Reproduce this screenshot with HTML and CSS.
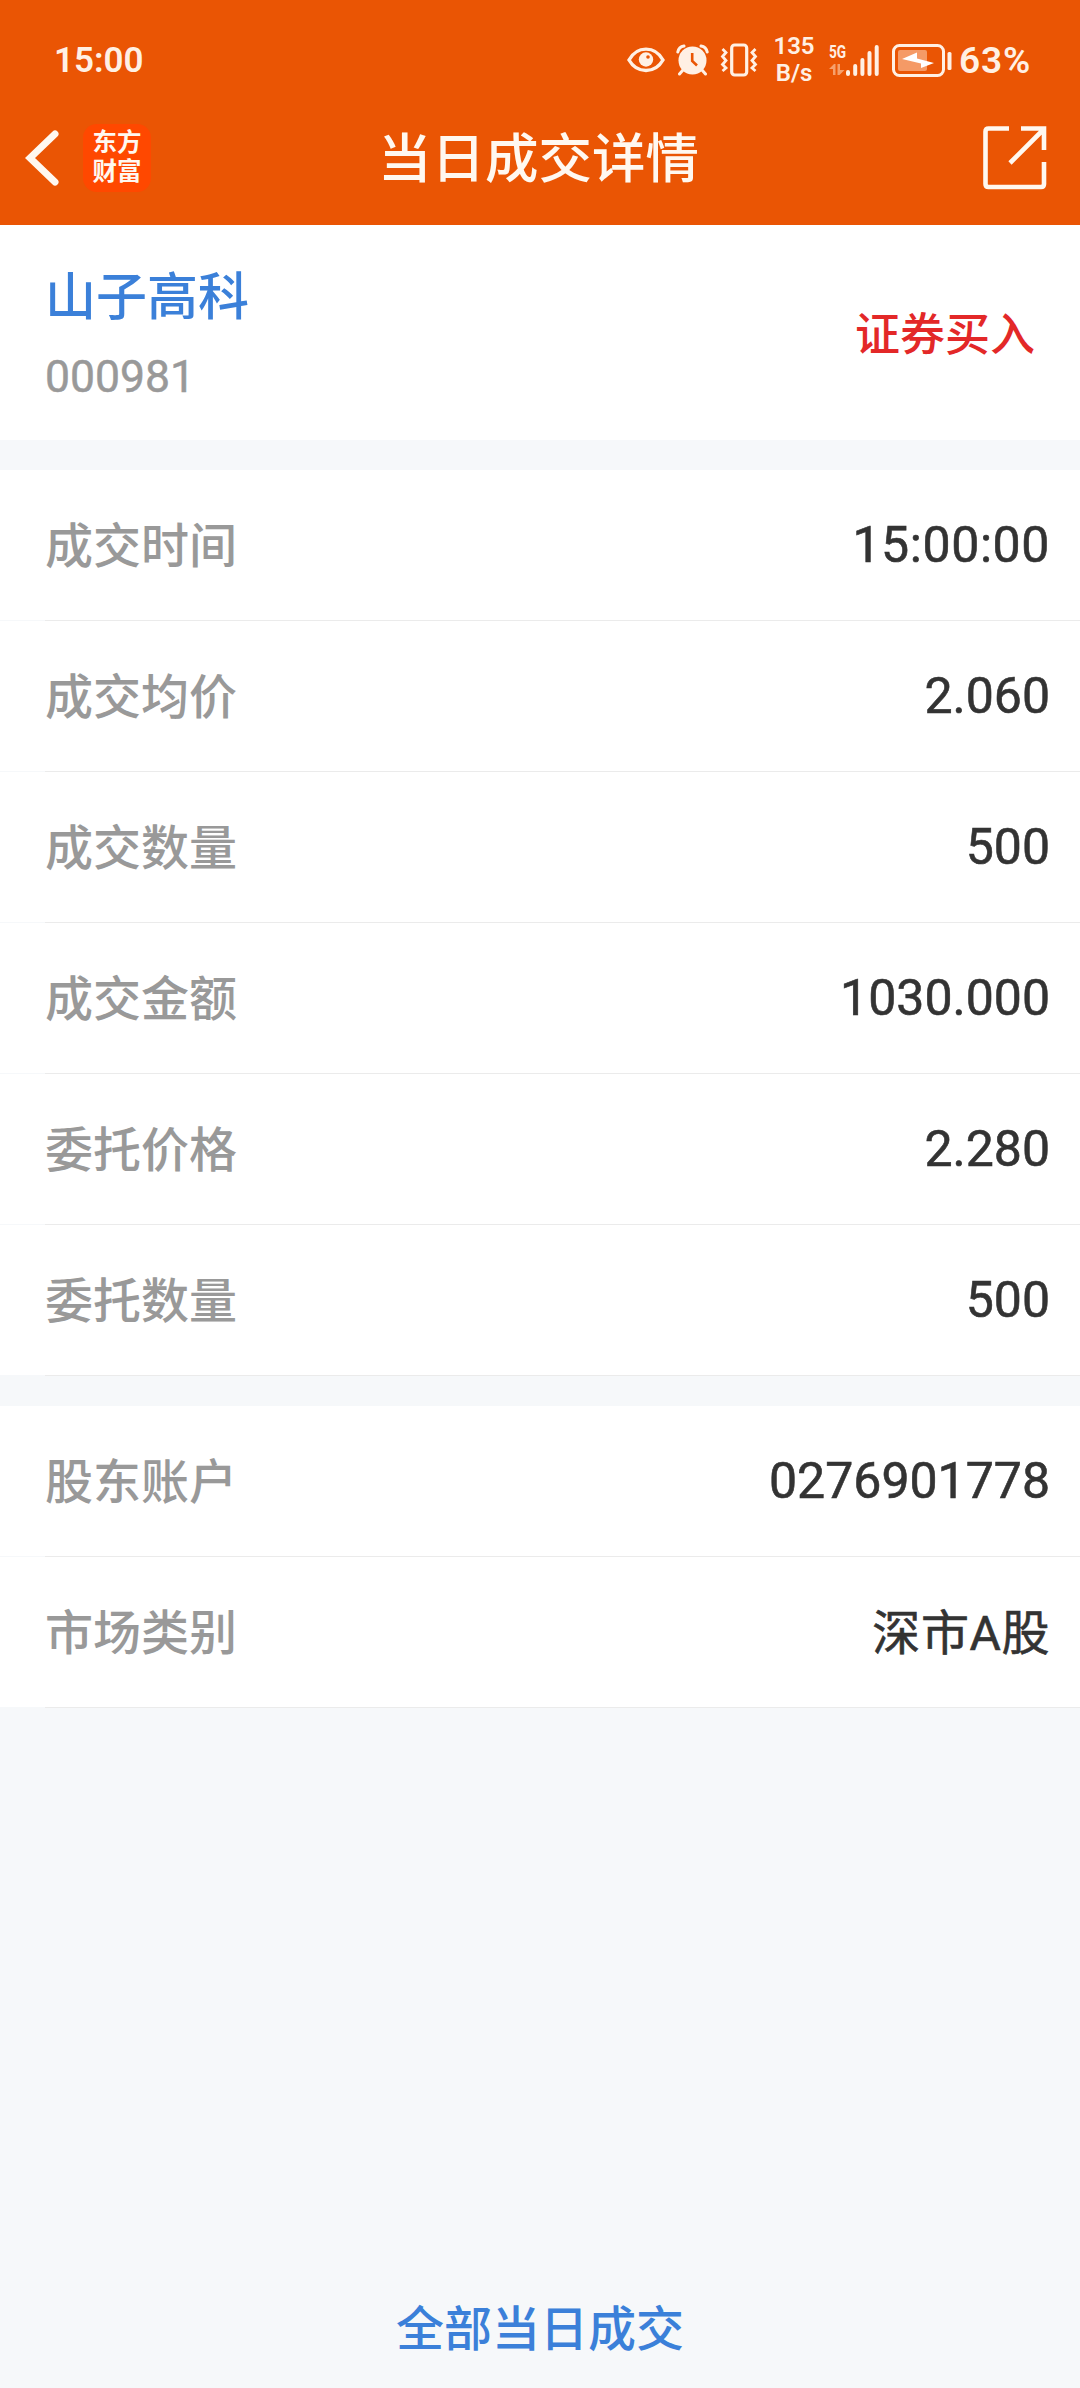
FILE: index.html
```html
<!DOCTYPE html>
<html lang="zh-CN">
<head>
    <meta charset="UTF-8">
    <meta name="viewport" content="width=device-width, initial-scale=1.0">
    <title>当日成交详情</title>
    <link rel="stylesheet" href="styles.css">
</head>
<body>
    <header>
        <div class="status-bar">
            <span class="clock">15:00</span>
            <div class="status-icons">
                <svg class="eye" width="38" height="26" viewBox="0 0 38 26">
                    <path d="M2 13C10-1.500 28-1.500 36 13C28 27 10 27 2 13Z" fill="none" stroke="#fff0e4" stroke-width="3.400"/>
                    <circle cx="19" cy="12.500" r="7.200" fill="#fff0e4"/>
                    <circle cx="21" cy="10" r="1.800" fill="#ea5504"/>
                </svg>
                <svg class="alarm" width="33" height="32" viewBox="0 0 33 32">
                    <circle cx="16.500" cy="16.500" r="14" fill="#fff0e4"/>
                    <path d="M1.800 8C2.500 4.500 5 2.500 8 2M31.200 8C30.500 4.500 28 2.500 25 2M7 26L3.500 30M26 26L29.500 30" fill="none" stroke="#fff0e4" stroke-width="3" stroke-linecap="round"/>
                    <path d="M16.200 9V17L21 21.500" fill="none" stroke="#ea5504" stroke-width="2.600"/>
                </svg>
                <svg class="vibrate" width="38" height="34" viewBox="0 0 38 34">
                    <rect x="11.700" y="2" width="15" height="30" rx="3" fill="none" stroke="#fff0e4" stroke-width="3.200"/>
                    <path d="M2.500 6L6 9.500L2.500 13.500L6 17.500L2.500 21.500L6 25L2.500 28M35.500 6L32 9.500L35.500 13.500L32 17.500L35.500 21.500L32 25L35.500 28" fill="none" stroke="#fff0e4" stroke-width="2.800"/>
                </svg>
                <div class="speed"><span>135</span><span>B/s</span></div>
                <div class="network">
                    <span>5G</span>
                    <svg width="16" height="11" viewBox="0 0 16 11">
                        <path d="M0 5L5 0H6.500V11H4V5ZM8.500 0H11V6H15.500L10.500 11H8.500Z" fill="#f6a06c"/>
                    </svg>
                </div>
                <svg class="signal" width="34" height="33" viewBox="0 0 34 33">
                    <path d="M2 28V30M9.200 22V30M16.400 16V30M23.500 9V30M30.700 3V30" stroke="#fff0e4" stroke-width="4" stroke-linecap="round"/>
                </svg>
                <svg class="battery" width="61" height="33" viewBox="0 0 61 33">
                    <rect x="1.500" y="1.500" width="50" height="30" rx="6" fill="none" stroke="#fff0e4" stroke-width="3"/>
                    <rect x="6" y="6" width="29" height="21" rx="2" fill="#f59a66"/>
                    <rect x="55.500" y="8" width="4" height="18" rx="1.500" fill="#fff0e4"/>
                    <path d="M10 15L25 8.500V14.500L42 19L29 24V19.500Z" fill="#fff"/>
                </svg>
                <span class="percent">63%</span>
            </div>
        </div>
        <nav class="nav-bar">
            <div class="nav-left">
                <svg width="34" height="58" viewBox="0 0 34 58">
                    <path d="M30 5L5 29L30 53" fill="none" stroke="#fff8f0" stroke-width="7" stroke-linecap="round"/>
                </svg>
                <div class="logo">东方<br>财富</div>
            </div>
            <h1>当日成交详情</h1>
            <svg class="share" width="64" height="64" viewBox="0 0 64 64">
                <path d="M26 2.500H5.500Q2.500 2.500 2.500 5.500V58Q2.500 61 5.500 61H58Q61 61 61 58V36M38 2.500H61V24M60 4L27 37" fill="none" stroke="#fff8f0" stroke-width="4.600"/>
            </svg>
        </nav>
    </header>

    <section class="stock">
        <div>
            <div class="stock-name">山子高科</div>
            <div class="stock-code">000981</div>
        </div>
        <div class="direction">证券买入</div>
    </section>

    <section class="list">
        <div class="row"><label>成交时间</label><span class="time">15:00:00</span></div>
        <div class="row"><label>成交均价</label><span>2.060</span></div>
        <div class="row"><label>成交数量</label><span>500</span></div>
        <div class="row"><label>成交金额</label><span>1030.000</span></div>
        <div class="row"><label>委托价格</label><span>2.280</span></div>
        <div class="row"><label>委托数量</label><span>500</span></div>
    </section>

    <section class="list">
        <div class="row"><label>股东账户</label><span>0276901778</span></div>
        <div class="row"><label>市场类别</label><span class="market">深市A股</span></div>
    </section>

    <footer><a>全部当日成交</a></footer>
</body>
</html>
```

FILE: styles.css
```css
* {
    box-sizing: border-box;
}

body {
    margin: 0;
    height: 2388px;
    display: flex;
    flex-direction: column;
    background-color: #f6f8fa;
    font-family: Roboto, "Noto Sans CJK SC", sans-serif;
}

header {
    height: 225px;
    background-color: #ea5504;
    color: #fff8f0;
}

.status-bar {
    height: 120px;
    padding: 0 48px 0 54px;
    display: flex;
    justify-content: space-between;
    align-items: center;
    color: #fff0e4;
}

.clock {
    font-size: 35px;
    font-weight: 600;
}

.status-icons {
    display: flex;
    align-items: center;
}

.alarm {
    margin-left: 11px;
}

.vibrate {
    margin-left: 11px;
}

.speed {
    display: flex;
    flex-direction: column;
    width: 42px;
    margin-left: 15px;
    font-size: 24px;
    line-height: 27px;
    font-weight: 600;
    text-align: center;
}

.network {
    display: flex;
    flex-direction: column;
    gap: 3px;
    width: 16px;
    margin-left: 14px;
    padding-bottom: 2px;
    font-size: 19px;
    line-height: 18px;
    font-weight: 700;
}

.network span {
    transform: scaleX(0.72);
    transform-origin: left;
}

.signal {
    margin-left: 1px;
}

.battery {
    margin-left: 12px;
}

.percent {
    width: 73px;
    margin-left: 6px;
    font-size: 37px;
    font-weight: 600;
    letter-spacing: 0.8px;
}

.nav-bar {
    height: 76px;
    display: grid;
    grid-template-columns: 1fr auto 1fr;
    align-items: center;
    padding: 0 33px 0 25px;
}

.nav-left {
    display: flex;
    align-items: center;
    gap: 24px;
}

.logo {
    width: 68px;
    height: 68px;
    padding-top: 4px;
    border-radius: 14px;
    background-color: #ff4800;
    font-size: 24.500px;
    line-height: 29px;
    font-weight: 700;
    text-align: center;
}

h1 {
    margin: 0;
    padding: 3px 0 0 5px;
    font-size: 53.500px;
    font-weight: 500;
    line-height: 73px;
}

.share {
    justify-self: end;
}

.stock {
    height: 215px;
    padding: 9px 45px 0;
    display: flex;
    justify-content: space-between;
    align-items: center;
    background-color: #fff;
}

.stock-name {
    padding-top: 2px;
    font-size: 51px;
    line-height: 78px;
    font-weight: 500;
    color: #3b80d9;
}

.stock-code {
    font-size: 44.500px;
    line-height: 80px;
    -webkit-text-stroke: 0.5px #999;
    color: #999;
}

.direction {
    padding-bottom: 12px;
    font-size: 45px;
    font-weight: 500;
    color: #e32828;
}

.list {
    margin-top: 30px;
}

/* the divider is inset, the strip left of it shows the page background */
.row {
    height: 151px;
    padding: 0 30px 1px 45px;
    display: flex;
    justify-content: space-between;
    align-items: center;
    background: linear-gradient(#ebebeb, #ebebeb) 45px 150px / 100% 1px no-repeat,
                linear-gradient(#fff, #fff) 0 0 / 100% 150px no-repeat;
    font-size: 50px;
    color: #333;
}

.row span {
    -webkit-text-stroke: 0.6px #333;
}

.row label {
    padding-bottom: 6px;
    font-size: 48px;
    font-weight: 500;
    color: #999;
}

.row .time {
    letter-spacing: 0.6px;
}

.row .market {
    padding-bottom: 6px;
    font-size: 48px;
    letter-spacing: 0.6px;
}

footer {
    margin-top: auto;
    height: 120px;
    line-height: 124px;
    text-align: center;
    font-size: 48px;
    font-weight: 500;
    color: #3b80d9;
}
```
